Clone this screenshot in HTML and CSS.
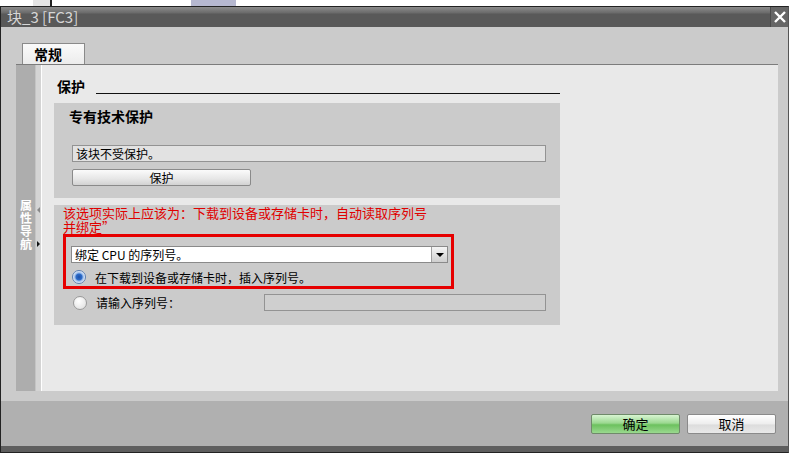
FILE: index.html
```html
<!DOCTYPE html>
<html lang="zh-CN">
  <head>
    <meta charset="UTF-8" />
    <title>块_3 [FC3]</title>
    <link rel="stylesheet" href="styles.css">
  </head>
  <body>
    <div class="backdrop">
      <span class="bd-a"></span>
      <span class="bd-b"></span>
      <span class="bd-c"></span>
    </div>
    <div class="dialog">
      <div class="titlebar">
        <span class="title">块_3 [FC3]</span>
        <span class="close">
          <svg width="14" height="14" viewBox="0 0 14 14">
            <path d="M2 2 L12 12 M12 2 L2 12" stroke="#fff" stroke-width="2.4" />
          </svg>
        </span>
      </div>
      <div class="body">
        <div class="tabs">
          <div class="tab">常规</div>
        </div>
        <div class="panel">
          <div class="nav">
            <div class="nav-strip">
              <span class="nav-text">属性导航</span>
            </div>
            <div class="nav-edge">
              <span class="arrow-left"></span>
              <span class="arrow-right"></span>
            </div>
          </div>
          <div class="content">
            <div class="section-head">
              <span>保护</span>
              <span class="rule"></span>
            </div>
            <div class="group">
              <div class="group-title">专有技术保护</div>
              <div class="field readonly">该块不受保护。</div>
              <button class="btn">保护</button>
            </div>
            <div class="group group-serial">
              <div class="note">该选项实际上应该为：下载到设备或存储卡时，自动读取序列号<br>并绑定”</div>
              <div class="highlight">
                <div class="select">
                  <span class="select-value">绑定 CPU 的序列号。</span>
                  <span class="select-btn"></span>
                </div>
                <label class="radio-row">
                  <span class="radio checked"></span>
                  <span>在下载到设备或存储卡时，插入序列号。</span>
                </label>
              </div>
              <label class="radio-row row-manual">
                <span class="radio"></span>
                <span class="radio-label">请输入序列号：</span>
                <span class="field disabled"></span>
              </label>
            </div>
          </div>
        </div>
      </div>
      <div class="footer">
        <button class="btn btn-ok">确定</button>
        <button class="btn btn-cancel">取消</button>
      </div>
    </div>
  </body>
</html>
```

FILE: styles.css
```css
html,
body {
  margin: 0;
  width: 789px;
  height: 455px;
  overflow: hidden;
  background: #fff;
  font-family: "Noto Sans CJK SC", "DejaVu Sans", sans-serif;
  font-size: 12px;
  color: #000;
}

.backdrop {
  height: 6px;
  display: flex;
  background: #fff;
}

.bd-a {
  width: 17px;
  margin-left: 33px;
  background: #e4e4e4;
}

.bd-b {
  width: 2px;
  background: #222;
}

.bd-c {
  width: 45px;
  margin-left: 139px;
  background: #b6b8d0;
}

.dialog {
  height: 445px;
  border: 1px solid #222;
  border-right-color: #555;
  display: flex;
  flex-direction: column;
  background: #cbcbcb;
}

.titlebar {
  flex: none;
  height: 20px;
  display: flex;
  justify-content: space-between;
  background: linear-gradient(#8c8c8c 0, #6a6a6a 6px, #595959 7px, #595959);
}

.title {
  color: #d6d6d6;
  font-size: 15px;
  line-height: 20px;
  padding-left: 6px;
}

.close {
  width: 17px;
  display: flex;
  align-items: center;
  justify-content: center;
  background: #666;
  border-left: 1px solid #4a4a4a;
}

.body {
  flex: none;
  height: 374px;
  padding: 16px 10px 0 15px;
  box-sizing: border-box;
}

.tabs {
  display: flex;
  padding-left: 6px;
  height: 21px;
}

.tab {
  width: 63px;
  border: 1px solid #8a8a8a;
  border-bottom: none;
  background: linear-gradient(#fafafa, #ececec);
  font-weight: bold;
  font-size: 14px;
  line-height: 20px;
  padding-left: 11px;
  box-sizing: border-box;
}

.panel {
  height: 326px;
  border-top: 1px solid #7c7c7c;
  background: #e9e9e9;
  display: flex;
}

.nav {
  display: flex;
  width: 26px;
}

.nav-strip {
  width: 19px;
  background: #adadad;
  display: flex;
  align-items: center;
  justify-content: center;
}

.nav-text {
  writing-mode: vertical-rl;
  text-orientation: upright;
  color: #fff;
  font-weight: bold;
  font-size: 12px;
  line-height: 14px;
  letter-spacing: 1px;
  margin-bottom: 6px;
}

.nav-edge {
  width: 5px;
  background: #d4d4d4;
  border-right: 1px solid #fff;
  border-left: 1px solid #c4c4c4;
  position: relative;
}

.arrow-left,
.arrow-right {
  position: absolute;
  left: 1px;
  width: 0;
  height: 0;
  border-top: 3px solid transparent;
  border-bottom: 3px solid transparent;
}

.arrow-left {
  top: 142px;
  border-right: 3px solid #888;
}

.arrow-right {
  top: 176px;
  border-left: 3px solid #111;
}

.content {
  width: 506px;
  padding: 13px 0 0 12px;
}

.section-head {
  display: flex;
  align-items: flex-end;
  height: 16px;
  font-weight: bold;
  font-size: 14px;
  line-height: 16px;
  padding-left: 3px;
}

.rule {
  flex: 1;
  border-bottom: 1px solid #111;
  margin-left: 11px;
}

.group {
  margin-top: 9px;
  height: 95px;
  background: #cbcbcb;
  padding: 3px 14px 0 18px;
  box-sizing: border-box;
  display: flex;
  flex-direction: column;
  align-items: flex-start;
}

.group-title {
  font-weight: bold;
  font-size: 14px;
  line-height: 20px;
  margin-left: -3px;
}

.field {
  height: 17px;
  box-sizing: border-box;
  border: 1px solid #939393;
  line-height: 15px;
  padding-left: 3px;
}

.field.readonly {
  width: 474px;
  margin-top: 19px;
  background: #e2e2e2;
}

.btn {
  height: 17px;
  width: 179px;
  margin-top: 7px;
  padding: 0;
  border: 1px solid #8a8a8a;
  border-radius: 2px;
  background: linear-gradient(#fbfbfb, #e6e6e6 60%, #d2d2d2);
  font-family: inherit;
  font-size: 12px;
  line-height: 15px;
  color: #000;
}

.group-serial {
  margin-top: 7px;
  height: 120px;
  padding: 1px 0 0 9px;
}

.note {
  color: #e00000;
  font-size: 13px;
  line-height: 14px;
}

.highlight {
  margin-top: 0;
  width: 391px;
  height: 55px;
  border: 3px solid #e60000;
  box-sizing: border-box;
  padding: 9px 0 0 5px;
}

.select {
  width: 377px;
  height: 17px;
  box-sizing: border-box;
  border: 1px solid #8a8a8a;
  background: #fff;
  display: flex;
  justify-content: space-between;
}

.select-value {
  line-height: 15px;
  padding-left: 3px;
}

.select-btn {
  width: 15px;
  background: linear-gradient(#f4f4f4, #cfcfcf);
  border-left: 1px solid #a0a0a0;
  position: relative;
}

.select-btn::after {
  content: "";
  position: absolute;
  left: 4px;
  top: 6px;
  border-left: 4px solid transparent;
  border-right: 4px solid transparent;
  border-top: 4px solid #000;
}

.radio-row {
  display: flex;
  align-items: center;
  height: 14px;
  margin-top: 7px;
  margin-left: 1px;
  gap: 9px;
}

.radio {
  width: 14px;
  height: 14px;
  box-sizing: border-box;
  border-radius: 50%;
  border: 1px solid #9a9a9a;
  background: radial-gradient(circle at 40% 35%, #fff, #dcdcdc);
}

.radio.checked {
  border-color: #5d7fb0;
  background: radial-gradient(circle, #1c4fa8 0, #2d6cc9 3px, #8fb4e8 4px, #e8f0fb 6px);
}

.row-manual {
  margin-top: 5px;
  margin-left: 10px;
  height: 17px;
}

.radio-label {
  width: 159px;
}

.field.disabled {
  width: 282px;
  background: #cfcfcf;
}

.footer {
  flex: none;
  height: 32px;
  background: #b0b0b0;
  border-bottom: 6px solid #5e5e5e;
  display: flex;
  justify-content: flex-end;
  align-items: flex-start;
  gap: 7px;
  padding: 13px 12px 0 0;
}

.footer .btn {
  width: 89px;
  height: 20px;
  margin-top: 0;
  font-size: 13px;
  line-height: 18px;
}

.btn-ok {
  background: linear-gradient(#d8f5d2, #9bd890 45%, #6cc15e 55%, #9ad98f);
  border-color: #6f8a6a;
}

.btn-cancel {
  background: linear-gradient(#ffffff, #ededed 50%, #dcdcdc 55%, #e8e8e8);
}
```
